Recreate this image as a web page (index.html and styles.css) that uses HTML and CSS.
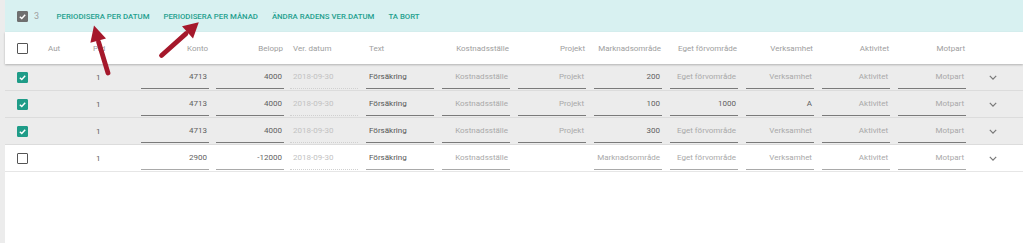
FILE: index.html
```html
<!DOCTYPE html>
<html lang="sv">
<head>
  <meta charset="UTF-8" />
  <title>Verifikationsrader</title>
  <link rel="stylesheet" href="styles.css">
</head>
<body>
  <div class="card">
    <div class="toolbar">
      <span class="cb cb-gray"><svg viewBox="0 0 10 10"><path d="M2 5.2 L4.2 7.2 L8 3" /></svg></span>
      <span class="count">3</span>
      <button class="action">Periodisera per datum</button>
      <button class="action">Periodisera per månad</button>
      <button class="action">Ändra radens ver.datum</button>
      <button class="action">Ta bort</button>
    </div>

    <div class="row head">
      <span class="cb"></span>
      <span class="c-aut">Aut</span>
      <span class="c-prd">Prd</span>
      <span class="cell r">Konto</span>
      <span class="cell r">Belopp</span>
      <span class="cell">Ver. datum</span>
      <span class="cell">Text</span>
      <span class="cell r">Kostnadsställe</span>
      <span class="cell r">Projekt</span>
      <span class="cell r">Marknadsområde</span>
      <span class="cell r">Eget förvområde</span>
      <span class="cell r">Verksamhet</span>
      <span class="cell r">Aktivitet</span>
      <span class="cell r">Motpart</span>
      <span></span>
    </div>

    <div class="row sel">
      <span class="cb cb-on"><svg viewBox="0 0 10 10"><path d="M2 5.2 L4.2 7.2 L8 3" /></svg></span>
      <span class="c-aut"></span>
      <span class="c-prd">1</span>
      <span class="cell in r val">4713</span>
      <span class="cell in r val">4000</span>
      <span class="cell date">2018-09-30</span>
      <span class="cell in dark">Försäkring</span>
      <span class="cell in r ph">Kostnadsställe</span>
      <span class="cell in r ph">Projekt</span>
      <span class="cell in r val">200</span>
      <span class="cell in r ph">Eget förvområde</span>
      <span class="cell in r ph">Verksamhet</span>
      <span class="cell in r ph">Aktivitet</span>
      <span class="cell in r ph">Motpart</span>
      <span class="chev"><svg viewBox="0 0 10 6"><path d="M1 1 L5 5 L9 1" /></svg></span>
    </div>

    <div class="row sel">
      <span class="cb cb-on"><svg viewBox="0 0 10 10"><path d="M2 5.2 L4.2 7.2 L8 3" /></svg></span>
      <span class="c-aut"></span>
      <span class="c-prd">1</span>
      <span class="cell in r val">4713</span>
      <span class="cell in r val">4000</span>
      <span class="cell date">2018-09-30</span>
      <span class="cell in dark">Försäkring</span>
      <span class="cell in r ph">Kostnadsställe</span>
      <span class="cell in r ph">Projekt</span>
      <span class="cell in r val">100</span>
      <span class="cell in r val">1000</span>
      <span class="cell in r val">A</span>
      <span class="cell in r ph">Aktivitet</span>
      <span class="cell in r ph">Motpart</span>
      <span class="chev"><svg viewBox="0 0 10 6"><path d="M1 1 L5 5 L9 1" /></svg></span>
    </div>

    <div class="row sel">
      <span class="cb cb-on"><svg viewBox="0 0 10 10"><path d="M2 5.2 L4.2 7.2 L8 3" /></svg></span>
      <span class="c-aut"></span>
      <span class="c-prd">1</span>
      <span class="cell in r val">4713</span>
      <span class="cell in r val">4000</span>
      <span class="cell date">2018-09-30</span>
      <span class="cell in dark">Försäkring</span>
      <span class="cell in r ph">Kostnadsställe</span>
      <span class="cell in r ph">Projekt</span>
      <span class="cell in r val">300</span>
      <span class="cell in r ph">Eget förvområde</span>
      <span class="cell in r ph">Verksamhet</span>
      <span class="cell in r ph">Aktivitet</span>
      <span class="cell in r ph">Motpart</span>
      <span class="chev"><svg viewBox="0 0 10 6"><path d="M1 1 L5 5 L9 1" /></svg></span>
    </div>

    <div class="row last">
      <span class="cb"></span>
      <span class="c-aut"></span>
      <span class="c-prd">1</span>
      <span class="cell in r val">2900</span>
      <span class="cell in r val">-12000</span>
      <span class="cell date">2018-09-30</span>
      <span class="cell in dark">Försäkring</span>
      <span class="cell in r ph">Kostnadsställe</span>
      <span class="cell"></span>
      <span class="cell in r ph">Marknadsområde</span>
      <span class="cell in r ph">Eget förvområde</span>
      <span class="cell in r ph">Verksamhet</span>
      <span class="cell in r ph">Aktivitet</span>
      <span class="cell in r ph">Motpart</span>
      <span class="chev"><svg viewBox="0 0 10 6"><path d="M1 1 L5 5 L9 1" /></svg></span>
    </div>
  </div>

  <!-- annotation arrows drawn on top of the screenshot -->
  <svg class="arrows" width="1023" height="243" viewBox="0 0 1023 243">
    <g stroke="#a5182b" stroke-width="4.8" stroke-linecap="round">
      <line x1="108" y1="73" x2="98.6" y2="42" />
      <line x1="161.5" y1="55.5" x2="186" y2="33.6" />
    </g>
    <g fill="#a5182b">
      <polygon points="94,25.5 106,38.4 90.4,42.8" />
      <polygon points="198.8,22.2 193,38.6 182,26.2" />
    </g>
  </svg>
</body>
</html>
```

FILE: styles.css
```css
* { box-sizing: border-box; }
body {
  margin: 0;
  background: #ececec;
  font-family: Roboto, 'Liberation Sans', sans-serif;
  font-size: 8px;
  color: #616161;
  height: 243px;
  overflow: hidden;
  position: relative;
}
.card {
  margin-left: 5px;
  background: #fff;
  height: 243px;
}
.toolbar {
  height: 32px;
  background: #d8f1f1;
  display: flex;
  align-items: center;
  padding-left: 12px;
}
.count {
  color: #9e9e9e;
  font-size: 9px;
  margin-left: 6px;
  margin-right: 10.5px;
}
.action {
  background: none;
  border: none;
  padding: 0 7px;
  font-family: inherit;
  font-size: 7.8px;
  font-weight: 500;
  color: #24a08e;
  text-transform: uppercase;
  cursor: pointer;
}
.cb {
  width: 11px;
  height: 11px;
  border: 1.5px solid #555;
  border-radius: 1px;
  display: inline-flex;
  align-items: center;
  justify-content: center;
  background: #fff;
}
.cb svg {
  width: 9px;
  height: 9px;
  fill: none;
  stroke: #fff;
  stroke-width: 1.6;
}
.cb-gray {
  background: #6f6f6f;
  border-color: #6f6f6f;
}
.cb-on {
  background: #1f9c88;
  border-color: #1f9c88;
}
.row {
  display: grid;
  grid-template-columns: 24px 40px 60px 75px 74px repeat(9, 76px) 1fr;
  align-items: center;
  height: 27px;
  padding-left: 12px;
  border-bottom: 1px solid #dcdcdc;
}
.row.head {
  height: 32px;
  border-bottom: none;
  box-shadow: 0 1px 2px rgba(0,0,0,0.25);
  color: #9e9e9e;
  position: relative;
}
.row.sel { background: #ececec; }
.row.last { border-bottom-color: #e6e6e6; }
.c-aut { padding-left: 7px; }
.c-prd { padding-left: 15px; }
.head .c-prd { padding-left: 12px; }
.cell {
  width: 68px;
  padding: 0 2px 0 3px;
  white-space: nowrap;
}
.cell.r { text-align: right; }
.head .cell.r { padding-right: 1px; }
.cell.in, .cell.date {
  align-self: stretch;
  display: flex;
  align-items: center;
  margin-bottom: 1px;
  border-bottom: 1px solid #7a7a7a;
}
.cell.in.r { justify-content: flex-end; }
.cell.date {
  border-bottom: 1px dotted #d0d0d0;
  color: #c2c2c2;
}
.last .cell.in { border-bottom-color: #a9a9a9; }
.val { color: #5f5f5f; }
.ph { color: #a9a9a9; }
.dark { color: #555; }
.chev {
  padding-left: 15px;
  display: flex;
}
.chev svg {
  width: 8px;
  height: 5px;
  fill: none;
  stroke: #777;
  stroke-width: 1.5;
}
.arrows {
  position: absolute;
  left: 0;
  top: 0;
  pointer-events: none;
}
```
